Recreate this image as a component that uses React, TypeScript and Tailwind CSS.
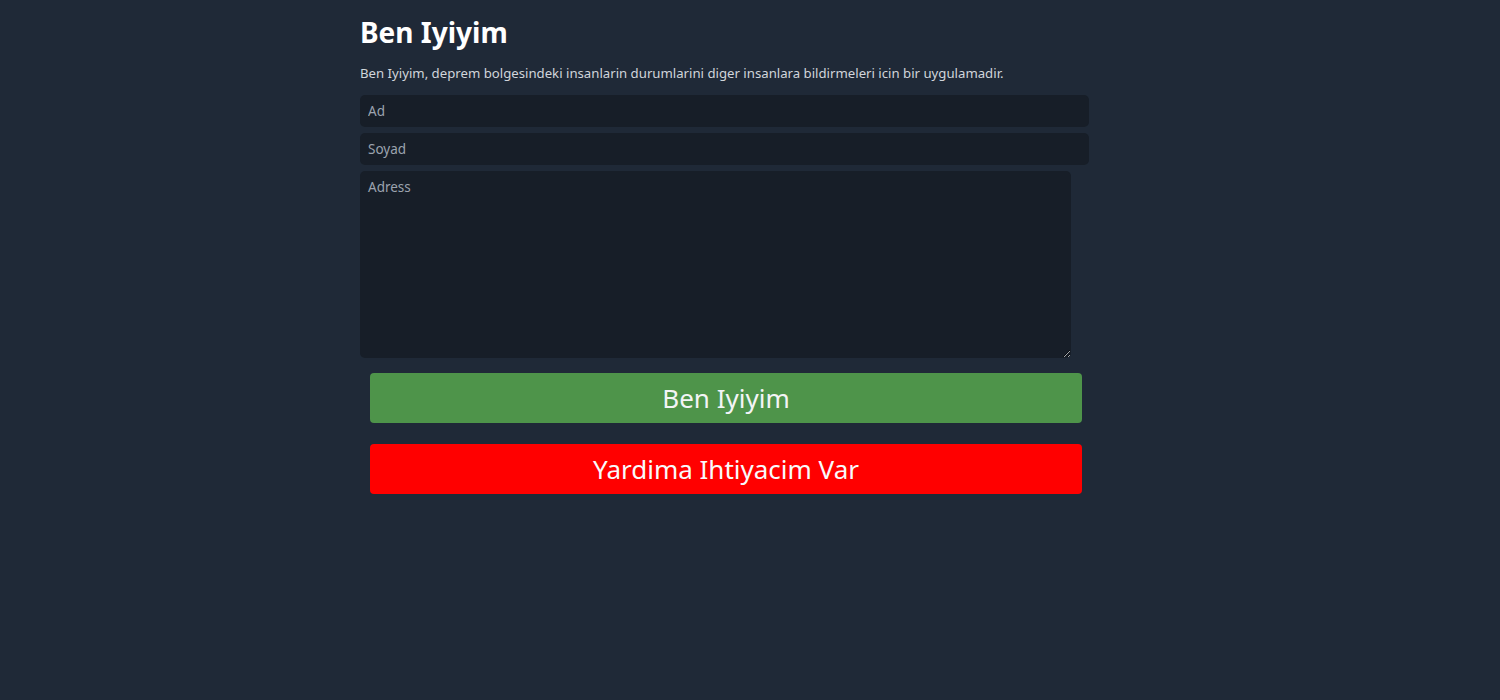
import React from "react";

const App = () => {
  return (
    <div
      className="min-h-[700px] w-full bg-[#1f2937] text-white"
      style={{ fontFamily: '"Noto Sans", "Open Sans", sans-serif' }}
    >
      <div className="w-[729px] pt-[12px] ml-[360px]">
        <h1 className="text-[28px] font-bold leading-[40px] text-white">Ben Iyiyim</h1>
        <p className="mt-[12px] text-[13.2px] leading-[18px] text-[#d1d5db]">
          Ben Iyiyim, deprem bolgesindeki insanlarin durumlarini diger insanlara bildirmeleri icin bir uygulamadir.
        </p>
        <form className="mt-[13px] flex flex-col gap-[6px]">
          <input
            placeholder="Ad"
            className="h-[32px] w-full rounded-[5px] bg-[#171e28] px-[8px] text-[13.5px] text-white placeholder:text-[#9ca3af] outline-none"
          />
          <input
            placeholder="Soyad"
            className="h-[32px] w-full rounded-[5px] bg-[#171e28] px-[8px] text-[13.5px] text-white placeholder:text-[#9ca3af] outline-none"
          />
          <textarea
            placeholder="Adress"
            className="h-[187px] w-[711px] rounded-[5px] bg-[#171e28] px-[8px] py-[6px] text-[13.5px] text-white placeholder:text-[#9ca3af] outline-none"
          />
        </form>
        <div className="ml-[10px] mt-[15px] flex w-[712px] flex-col gap-[21px]">
          <button className="h-[50px] rounded-[4px] bg-[#4e944a] text-[26px] text-[#f3f4f6]">
            Ben Iyiyim
          </button>
          <button className="h-[50px] rounded-[4px] bg-[#ff0000] text-[26px] text-[#f9fafb]">
            Yardima Ihtiyacim Var
          </button>
        </div>
      </div>
    </div>
  );
};

export default App;
